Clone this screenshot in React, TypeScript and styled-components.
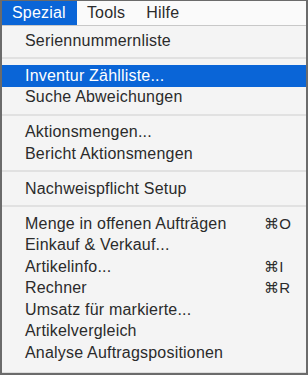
import styled, { createGlobalStyle } from "styled-components";

const GlobalStyle = createGlobalStyle`
  html, body {
    margin: 0;
    padding: 0;
    background: #f4f4f4;
  }
  body {
    font-family: "Liberation Sans", Arial, "DejaVu Sans", sans-serif;
  }
`;

type Entry =
  | { kind: "item"; label: string; shortcut?: string; active?: boolean }
  | { kind: "sep" };

const entries: Entry[] = [
  { kind: "item", label: "Seriennummernliste" },
  { kind: "sep" },
  { kind: "item", label: "Inventur Zählliste...", active: true },
  { kind: "item", label: "Suche Abweichungen" },
  { kind: "sep" },
  { kind: "item", label: "Aktionsmengen..." },
  { kind: "item", label: "Bericht Aktionsmengen" },
  { kind: "sep" },
  { kind: "item", label: "Nachweispflicht Setup" },
  { kind: "sep" },
  { kind: "item", label: "Menge in offenen Aufträgen", shortcut: "⌘O" },
  { kind: "item", label: "Einkauf & Verkauf..." },
  { kind: "item", label: "Artikelinfo...", shortcut: "⌘I" },
  { kind: "item", label: "Rechner", shortcut: "⌘R" },
  { kind: "item", label: "Umsatz für markierte..." },
  { kind: "item", label: "Artikelvergleich" },
  { kind: "item", label: "Analyse Auftragspositionen" },
];

const App = () => {
  return (
    <>
      <GlobalStyle />
      <Frame>
        <MenuBar>
          <BarItem $active>Spezial</BarItem>
          <BarItem>Tools</BarItem>
          <BarItem>Hilfe</BarItem>
        </MenuBar>
        <Dropdown>
          {entries.map((e, i) =>
            e.kind === "sep" ? (
              <Separator key={i} />
            ) : (
              <Row key={i} $active={e.active}>
                <span>{e.label}</span>
                <Shortcut>{e.shortcut}</Shortcut>
              </Row>
            )
          )}
        </Dropdown>
      </Frame>
    </>
  );
};

const Frame = styled.div`
  box-sizing: border-box;
  width: 308px;
  height: 375px;
  border: 2px solid #6b6b6b;
  border-top-width: 1px;
  background: #f4f4f4;
  display: flex;
  flex-direction: column;
  overflow: hidden;
`;

const MenuBar = styled.div`
  display: flex;
  height: 24px;
  background: #fafafa;
  border-bottom: 1px solid #c8c8c8;
`;

const BarItem = styled.div<{ $active?: boolean }>`
  display: flex;
  align-items: center;
  padding: 0 11px 0 10px;
  font-size: 16px;
  letter-spacing: 0.2px;
  color: ${(p) => (p.$active ? "#ffffff" : "#2b2b2b")};
  background: ${(p) => (p.$active ? "#0a65d7" : "transparent")};
`;

const Dropdown = styled.div`
  flex: 1;
  display: flex;
  flex-direction: column;
  padding: 4px 0 5px;
  background: #f4f4f4;
  border-bottom: 1px solid #dcdcdc;
`;

const Row = styled.div<{ $active?: boolean }>`
  display: grid;
  grid-template-columns: 1fr 42px;
  align-items: center;
  height: 21.5px;
  padding-left: 23px;
  font-size: 16px;
  letter-spacing: 0.2px;
  white-space: nowrap;
  color: ${(p) => (p.$active ? "#ffffff" : "#2b2b2b")};
  background: ${(p) => (p.$active ? "#0a65d7" : "transparent")};
`;

const Shortcut = styled.span`
  font-size: 15px;
`;

const Separator = styled.div`
  height: 13.5px;
  display: flex;
  align-items: center;

  &::before {
    content: "";
    flex: 1;
    height: 2px;
    background: #e1e1e1;
  }
`;

export default App;
